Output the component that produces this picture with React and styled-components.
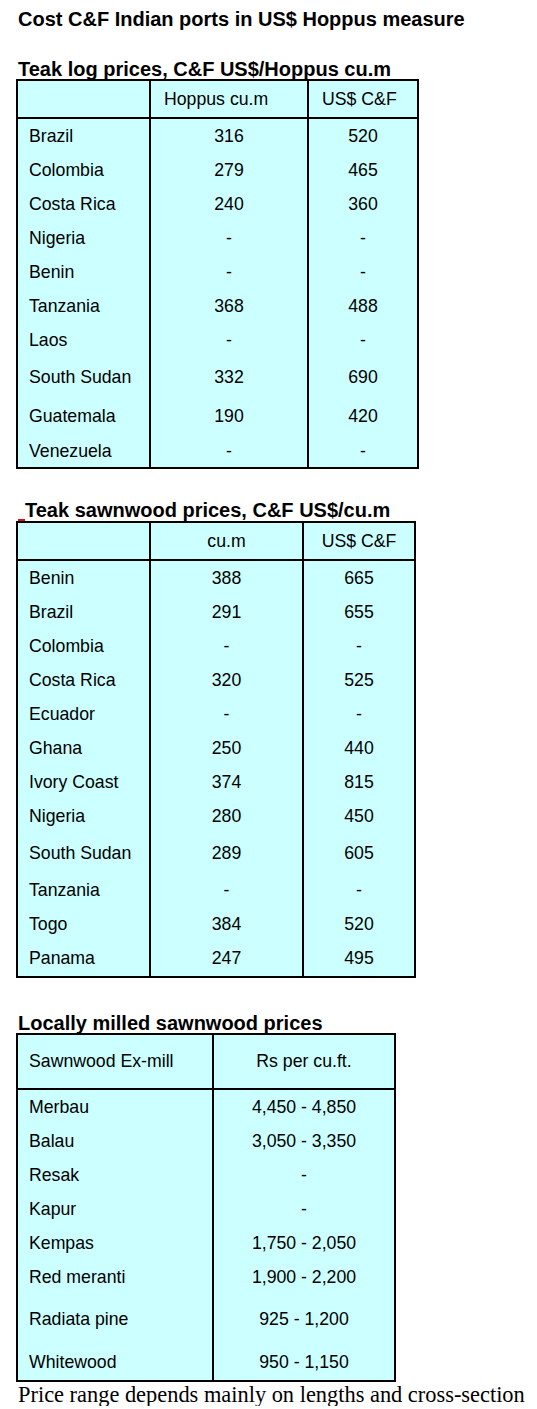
import React from "react";
import styled, { createGlobalStyle } from "styled-components";

const GlobalStyle = createGlobalStyle`
  html, body {
    margin: 0;
    padding: 0;
    background: #ffffff;
  }
  body {
    font-family: "Liberation Sans", Arial, sans-serif;
    color: #000000;
  }
`;

const Page = styled.div`
  width: 537px;
  padding: 9px 0 0 16px;
  box-sizing: border-box;
`;

const Title = styled.h1`
  margin: 0 0 0 2px;
  font-size: 20px;
  line-height: 20px;
  font-weight: bold;
`;

const Heading = styled.h2`
  margin: ${(p) => p.$top}px 0 0 2px;
  font-size: 20px;
  line-height: 20px;
  font-weight: bold;
  white-space: nowrap;
`;

const RedMark = styled.span`
  display: inline-block;
  width: 7px;
  height: 2px;
  background: #e01010;
  vertical-align: -4px;
`;

const Grid = styled.div`
  display: grid;
  grid-template-columns: ${(p) => p.$cols};
  width: fit-content;
  border: 2px solid #000;
  background: #ccffff;
`;

const Cell = styled.div`
  box-sizing: border-box;
  height: ${(p) => p.$h}px;
  display: flex;
  align-items: center;
  justify-content: ${(p) => (p.$pad != null ? "flex-start" : "center")};
  padding-left: ${(p) => p.$pad || 0}px;
  border-left: ${(p) => (p.$first ? "none" : "2px solid #000")};
  border-bottom: ${(p) => (p.$head ? "2px solid #000" : "none")};
  font-size: 17.7px;
  white-space: nowrap;
`;

const Note = styled.p`
  margin: 2px 0 0 2px;
  font-family: "Liberation Serif", "Times New Roman", serif;
  font-size: 22.4px;
  line-height: 22px;
  white-space: nowrap;
`;

// headPad: left padding for each header cell, null means centred
const PriceTable = ({ cols, head, headPad, headH, rows, heights }) => (
  <Grid $cols={cols}>
    {head.map((h, i) => (
      <Cell key={"h" + i} $h={headH} $head $first={i === 0} $pad={headPad[i]}>
        {h}
      </Cell>
    ))}
    {rows.map((r, ri) =>
      r.map((v, ci) => (
        <Cell
          key={ri + "-" + ci}
          $h={heights[ri]}
          $first={ci === 0}
          $pad={ci === 0 ? 11 : null}
        >
          {v}
        </Cell>
      ))
    )}
  </Grid>
);

const logRows = [
  ["Brazil", "316", "520"],
  ["Colombia", "279", "465"],
  ["Costa Rica", "240", "360"],
  ["Nigeria", "-", "-"],
  ["Benin", "-", "-"],
  ["Tanzania", "368", "488"],
  ["Laos", "-", "-"],
  ["South Sudan", "332", "690"],
  ["Guatemala", "190", "420"],
  ["Venezuela", "-", "-"],
];

const sawnRows = [
  ["Benin", "388", "665"],
  ["Brazil", "291", "655"],
  ["Colombia", "-", "-"],
  ["Costa Rica", "320", "525"],
  ["Ecuador", "-", "-"],
  ["Ghana", "250", "440"],
  ["Ivory Coast", "374", "815"],
  ["Nigeria", "280", "450"],
  ["South Sudan", "289", "605"],
  ["Tanzania", "-", "-"],
  ["Togo", "384", "520"],
  ["Panama", "247", "495"],
];

const localRows = [
  ["Merbau", "4,450 - 4,850"],
  ["Balau", "3,050 - 3,350"],
  ["Resak", "-"],
  ["Kapur", "-"],
  ["Kempas", "1,750 - 2,050"],
  ["Red meranti", "1,900 - 2,200"],
  ["Radiata pine", "925 - 1,200"],
  ["Whitewood", "950 - 1,150"],
];

export default function App() {
  return (
    <>
      <GlobalStyle />
      <Page>
        <Title>Cost C&amp;F Indian ports in US$ Hoppus measure</Title>

        <Heading $top={30}>Teak log prices, C&amp;F US$/Hoppus cu.m</Heading>
        <PriceTable
          cols="131px 158px 110px"
          head={["", "Hoppus cu.m", "US$ C&F"]}
          headPad={[11, 13, 13]}
          headH={38}
          rows={logRows}
          heights={[34, 34, 34, 34, 34, 34, 34, 40, 38, 32]}
        />

        <Heading $top={31}>
          <RedMark />
          Teak sawnwood prices, C&amp;F US$/cu.m
        </Heading>
        <PriceTable
          cols="131px 153px 112px"
          head={["", "cu.m", "US$ C&F"]}
          headPad={[11, null, null]}
          headH={38}
          rows={sawnRows}
          heights={[34, 34, 34, 34, 34, 34, 34, 34, 40, 34, 34, 35]}
        />

        <Heading $top={35}>Locally milled sawnwood prices</Heading>
        <PriceTable
          cols="194px 182px"
          head={["Sawnwood Ex-mill", "Rs per cu.ft."]}
          headPad={[11, null]}
          headH={55}
          rows={localRows}
          heights={[34, 34, 34, 34, 34, 34, 50, 36]}
        />

        <Note>Price range depends mainly on lengths and cross-section</Note>
      </Page>
    </>
  );
}
